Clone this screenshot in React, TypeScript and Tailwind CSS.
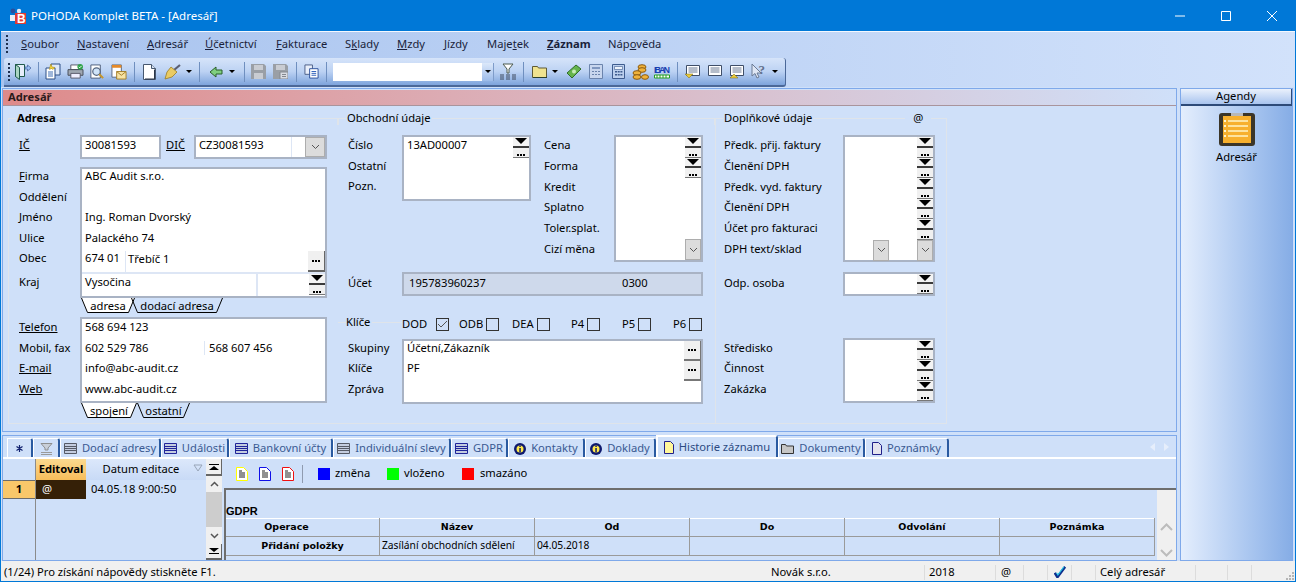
import type { ReactNode } from "react"

const frameLine = "border-[#dfe4ea]"

function Grip() {
    return (
        <div className="flex flex-col gap-[2px] w-[3px]">
            <div className="w-[2px] h-[2px] bg-[#1d2f4f]" />
            <div className="w-[2px] h-[2px] bg-[#1d2f4f]" />
            <div className="w-[2px] h-[2px] bg-[#1d2f4f]" />
            <div className="w-[2px] h-[2px] bg-[#1d2f4f]" />
            <div className="w-[2px] h-[2px] bg-[#1d2f4f]" />
        </div>
    )
}

function LogoIcon() {
    return (
        <svg width="17" height="16" viewBox="0 0 17 16">
            <circle cx="4" cy="3" r="2.4" fill="#2a4f9c" />
            <circle cx="10" cy="3" r="2.2" fill="#e8eef8" />
            <path d="M1 7h6v6H1z" fill="#e8eef8" />
            <path d="M6 5h11v11H6z" fill="#e23b35" />
            <text x="8" y="14.5" fontSize="12" fontWeight="700" fill="#fff" fontFamily="Liberation Sans, sans-serif">B</text>
        </svg>
    )
}

function ToolIcon({ name }: { name: string }) {
    switch (name) {
        case "exit":
            return (
                <svg width="18" height="18" viewBox="0 0 18 18" fill="none">
                    <path d="M1.500 1.500h9v12h-9z" fill="#e6eefa" stroke="#1f5a4a" />
                    <path d="M1.500 1.500l4 3v12l-4-3z" fill="#a9d6c2" stroke="#1f5a4a" />
                    <path d="M17 5l-3.500-3v2H11v2h2.500v2z" fill="#9cc0f5" stroke="#3d5f9c" strokeWidth=".7" />
                </svg>
            )
        case "docs":
            return (
                <svg width="16" height="17" viewBox="0 0 16 17">
                    <path d="M6 1h9v11H6z" fill="#dfe9f8" stroke="#2d4f86" />
                    <path d="M1 5h9v11H1z" fill="#fff" stroke="#2d4f86" />
                    <path d="M3 9h5M3 11h5M3 13h5" stroke="#3f6fb5" />
                    <path d="M6 1l1 3 3 .5-2 2-1.500-1-2 1 .5-3z" fill="#f4d53b" stroke="#b08a10" strokeWidth=".5" />
                </svg>
            )
        case "print":
            return (
                <svg width="17" height="15" viewBox="0 0 18 16">
                    <path d="M4 1h9v5H4z" fill="#fff" stroke="#556" />
                    <path d="M1 6h16v6H1z" fill="#9fa7b2" stroke="#444c58" />
                    <path d="M4 10h10v5H4z" fill="#eef" stroke="#556" />
                    <circle cx="14" cy="3" r="3" fill="#2fa24a" />
                    <path d="M12.500 3l1 1 2-2" stroke="#fff" fill="none" />
                </svg>
            )
        case "preview":
            return (
                <svg width="16" height="16" viewBox="0 0 17 17">
                    <path d="M2 1h10v14H2z" fill="#fff" stroke="#4a5a78" />
                    <circle cx="8" cy="8" r="4" fill="#cfe3f8" stroke="#55657f" strokeWidth="1.300" />
                    <path d="M11 11l4 4" stroke="#c6962c" strokeWidth="2.200" />
                </svg>
            )
        case "mail":
            return (
                <svg width="16" height="16" viewBox="0 0 17 17">
                    <path d="M1 1h10v13H1z" fill="#fff" stroke="#55657f" />
                    <path d="M1 1h10v3H1z" fill="#e58a2a" />
                    <path d="M6 8h10v8H6z" fill="#f6e3a5" stroke="#a47d24" />
                    <path d="M6 8l5 4 5-4" fill="none" stroke="#a47d24" />
                </svg>
            )
        case "doc":
            return (
                <svg width="13" height="16" viewBox="0 0 13 16">
                    <path d="M.5.500h8l4 4v11H.5z" fill="#fff" stroke="#46576f" />
                    <path d="M8.500.500v4h4" fill="#d6e2f4" stroke="#46576f" />
                    <path d="M11.500 5.500v9.500H2" stroke="#2a3547" fill="none" />
                </svg>
            )
        case "broom":
            return (
                <svg width="17" height="16" viewBox="0 0 17 16">
                    <path d="M10 6l6-5" stroke="#5b5f72" strokeWidth="2.200" />
                    <path d="M7 3l6 5-5 5-7 2 2-7z" fill="#eacb63" stroke="#9a7c23" strokeWidth=".8" />
                </svg>
            )
        case "back":
            return (
                <svg width="14" height="12" viewBox="0 0 14 12">
                    <path d="M1 6l6-5v3h6v4H7v3z" fill="#7fcf7f" stroke="#2a5f2a" />
                </svg>
            )
        case "save":
            return (
                <svg width="15" height="15" viewBox="0 0 15 15">
                    <path d="M0 0h13l2 2v13H0z" fill="#9a9fa6" />
                    <path d="M3 1h9v5H3zM3 9h9v6H3z" fill="#c9ccd2" />
                </svg>
            )
        case "saveas":
            return (
                <svg width="15" height="15" viewBox="0 0 15 15">
                    <path d="M0 0h13l2 2v13H0z" fill="#9a9fa6" />
                    <path d="M3 1h9v5H3z" fill="#c9ccd2" />
                    <path d="M7 8h8v7H7z" fill="#d9dce2" stroke="#84888f" />
                    <path d="M9 10.500h4M9 12.500h4" stroke="#84888f" />
                </svg>
            )
        case "copy":
            return (
                <svg width="15" height="15" viewBox="0 0 16 16">
                    <path d="M1 1h8v10H1z" fill="#e9effa" stroke="#4a5d85" />
                    <path d="M6 5h9v10H6z" fill="#fff" stroke="#2a4f9c" />
                    <path d="M8 8h5M8 10h5M8 12h5" stroke="#2a5cb8" />
                </svg>
            )
        case "filter":
            return (
                <svg width="18" height="17" viewBox="0 0 18 17">
                    <path d="M4 1h10l-4 5v4H8V6z" fill="#fff" stroke="#4d5a4f" />
                    <path d="M1 12h4M7 12h4M13 12h4M1 14h4M7 14h4M13 14h4M1 16h4M7 16h4M13 16h4" stroke="#3f4a5f" />
                </svg>
            )
        case "folder":
            return (
                <svg width="15" height="13" viewBox="0 0 15 13">
                    <path d="M.5 1.500h5l1 1.500h8v9.500H.5z" fill="#f0e38f" stroke="#5f5a36" />
                    <path d="M1 12.500h14" stroke="#2b3f2b" />
                </svg>
            )
        case "money":
            return (
                <svg width="16" height="15" viewBox="0 0 16 15">
                    <path d="M1 9l9-8 5 4-9 9z" fill="#65b44c" stroke="#2f6d2b" />
                    <circle cx="8" cy="7.500" r="2" fill="#c9ecb8" />
                </svg>
            )
        case "calcDim":
            return (
                <svg width="14" height="15" viewBox="0 0 14 15">
                    <path d="M.5.500h13v14H.5z" fill="#c8d6ee" stroke="#6b84ad" />
                    <path d="M3 3h8v2H3z" fill="#7f97c0" />
                    <path d="M3 7h2v1H3zM6 7h2v1H6zM9 7h2v1H9zM3 10h2v1H3zM6 10h2v1H6zM9 10h2v1H9z" fill="#6b84ad" />
                </svg>
            )
        case "calc":
            return (
                <svg width="13" height="15" viewBox="0 0 13 15">
                    <path d="M.5.500h12v14H.5z" fill="#bcd0ee" stroke="#3e5c8f" />
                    <path d="M2.500 2.500h8v3h-8z" fill="#eef4fc" stroke="#3e5c8f" strokeWidth=".6" />
                    <path d="M3 7h2v1.500H3zM5.700 7h2v1.500h-2zM8.400 7h2v1.500h-2zM3 10h2v1.500H3zM5.700 10h2v1.500h-2zM8.400 10h2v1.500h-2z" fill="#3e5c8f" />
                </svg>
            )
        case "coins":
            return (
                <svg width="17" height="16" viewBox="0 0 17 16">
                    <g fill="#f0b23a" stroke="#8b5a10">
                        <ellipse cx="10" cy="3" rx="4" ry="2.300" />
                        <ellipse cx="10" cy="6" rx="4" ry="2.300" />
                        <ellipse cx="5" cy="9" rx="4" ry="2.300" />
                        <ellipse cx="5" cy="13" rx="4" ry="2.300" />
                        <ellipse cx="13" cy="13" rx="3.500" ry="2.300" />
                    </g>
                </svg>
            )
        case "iban":
            return (
                <svg width="17" height="14" viewBox="0 0 17 14">
                    <text x="0" y="8" fontSize="9" fontWeight="700" fill="#1a3fb0" fontFamily="Liberation Sans Narrow, Liberation Sans, sans-serif" textLength="16">IBAN</text>
                    <path d="M.5 10h15v3H.5z" fill="#fff" stroke="#25a020" />
                    <path d="M3 10v3M6 10v3M9 10v3M12 10v3" stroke="#25a020" />
                </svg>
            )
        case "listDown":
        case "listUp":
        case "list":
            return (
                <svg width="15" height="15" viewBox="0 0 15 15">
                    <path d="M1.500 1.500h13v10h-13z" fill="#fff" stroke="#3f4e68" />
                    <path d="M3.500 4h9M3.500 6h9M3.500 8h9" stroke="#6b7a94" />
                    {name === "listDown" && <path d="M0 10h8l-4 4z" fill="#e9c93a" stroke="#7b6a15" strokeWidth=".5" />}
                    {name === "listUp" && <path d="M1 14h8l-4-4z" fill="#e9c93a" stroke="#7b6a15" strokeWidth=".5" />}
                </svg>
            )
        case "help":
            return (
                <svg width="16" height="17" viewBox="0 0 16 17">
                    <path d="M1 1v12l3-2.500 2 4.500 2-1-2-4h4z" fill="#dfe7f5" stroke="#6b7a94" />
                    <text x="7.500" y="11" fontSize="13" fontWeight="700" fill="#63718c" fontFamily="Liberation Serif, serif">?</text>
                </svg>
            )
        default:
            return null
    }
}

function Tool({ name, w = "w-[22px]" }: { name: string; w?: string }) {
    return (
        <div className={`flex items-center justify-center h-[22px] ${w}`}>
            <ToolIcon name={name} />
        </div>
    )
}

function Caret({ w = "w-[10px]" }: { w?: string }) {
    return (
        <div className={`flex items-center justify-center ${w}`}>
            <div className="w-0 h-0 border-x-[3.5px] border-x-transparent border-t-[3.5px] border-t-black" />
        </div>
    )
}

function Sep({ w = "w-[8px]" }: { w?: string }) {
    return (
        <div className={`flex justify-center ${w}`}>
            <div className="w-px h-[20px] bg-[#f2f6fd] border-l border-[#6f8fbf]" />
        </div>
    )
}

const menuItems: [ReactNode, string][] = [
    [<><u>S</u>oubor</>, "w-[56px]"],
    [<><u>N</u>astavení</>, "w-[70px]"],
    [<><u>A</u>dresář</>, "w-[58px]"],
    [<><u>Ú</u>četnictví</>, "w-[71px]"],
    [<><u>F</u>akturace</>, "w-[69px]"],
    [<>S<u>k</u>lady</>, "w-[52px]"],
    [<><u>M</u>zdy</>, "w-[47px]"],
    [<><u>J</u>ízdy</>, "w-[43px]"],
    [<>Maje<u>t</u>ek</>, "w-[60px]"],
    [<b><u>Z</u>áznam</b>, "w-[61px]"],
    [<>Náp<u>o</u>věda</>, "w-[70px]"],
]

function Toolbar() {
    return (
        <div className="flex items-center w-[782px] h-[29px] ml-[3px] pl-[4px] rounded-t-[3px] rounded-br-[3px] border-b-2 border-r border-[#4b6898] bg-gradient-to-b from-[#d6e4fa] via-[#bcd2f3] to-[#7ea4dc]">
            <Grip />
            <div className="w-px" />
            <Tool name="exit" />
            <Sep />
            <Tool name="docs" />
            <Tool name="print" />
            <Tool name="preview" />
            <Tool name="mail" />
            <Sep />
            <Tool name="doc" />
            <Tool name="broom" w="w-[24px]" />
            <Caret />
            <Sep w="w-[11px]" />
            <Tool name="back" />
            <Caret />
            <Sep w="w-[14px]" />
            <Tool name="save" w="w-[15px]" />
            <div className="w-[7px]" />
            <Tool name="saveas" w="w-[15px]" />
            <Sep w="w-[16px]" />
            <Tool name="copy" w="w-[15px]" />
            <Sep w="w-[14px]" />
            <div className="flex w-[161px] h-[18px] bg-white">
                <div className="flex-1" />
                <div className="flex w-[12px] bg-gradient-to-b from-[#dce8fa] to-[#9dbbe9] border-r border-[#7f9cc9]">
                    <Caret w="w-[12px]" />
                </div>
            </div>
            <Tool name="filter" w="w-[28px]" />
            <Sep w="w-[2px]" />
            <Tool name="folder" w="w-[30px]" />
            <Caret w="w-[2px]" />
            <div className="w-[7px]" />
            <Tool name="money" />
            <Tool name="calcDim" />
            <Tool name="calc" />
            <Tool name="coins" />
            <Tool name="iban" />
            <Sep />
            <Tool name="listDown" />
            <Tool name="list" />
            <Tool name="listUp" />
            <Tool name="help" w="w-[24px]" />
            <Caret w="w-[8px]" />
        </div>
    )
}

function Lbl({ children, h = "h-[20.5px]" }: { children: ReactNode; h?: string }) {
    return <div className={`${h} leading-[14px] whitespace-nowrap`}>{children}</div>
}

function Labels({ items, w, pt = "pt-[2px]", h }: { items: ReactNode[]; w: string; pt?: string; h?: string }) {
    return (
        <div className={`shrink-0 ${w} ${pt}`}>
            {items.map((it, i) => (
                <Lbl key={i} h={h}>{it}</Lbl>
            ))}
        </div>
    )
}

function Arrow() {
    return (
        <div className="flex justify-center items-start h-[10.5px] bg-[#f3f3f3] border-b-2 border-[#3a3a3a] pt-[1px]">
            <div className="w-0 h-0 border-x-[6px] border-x-transparent border-t-[6px] border-t-black" />
        </div>
    )
}

function DotRow() {
    return (
        <div className="flex gap-px">
            <div className="w-[2px] h-[2px] bg-black" />
            <div className="w-[2px] h-[2px] bg-black" />
            <div className="w-[2px] h-[2px] bg-black" />
        </div>
    )
}

function Dots({ tall }: { tall?: boolean }) {
    if (tall) {
        return (
            <div className="flex justify-center items-center h-[20px] bg-[#f0f0f0] border-b-2 border-r border-[#777]">
                <DotRow />
            </div>
        )
    }
    return (
        <div className="flex justify-center items-end h-[10px] bg-[#f0f0f0] border-b border-[#777] pb-[1px]">
            <DotRow />
        </div>
    )
}

function ArrowDots() {
    return (
        <div className="w-[16px]">
            <Arrow />
            <Dots />
        </div>
    )
}

function Chevron({ w = "w-[16px]", h = "h-[21px]" }: { w?: string; h?: string }) {
    return (
        <div className={`flex items-center justify-center ${w} ${h} bg-[#dcdcdc] border border-[#adadad]`}>
            <svg width="9" height="6" viewBox="0 0 9 6" fill="none">
                <path d="M1 1l3.500 3.500L8 1" stroke="#555" />
            </svg>
        </div>
    )
}

function Box({ children, className }: { children?: ReactNode; className: string }) {
    return <div className={`bg-white border-2 border-[#a9b3c4] ${className}`}>{children}</div>
}

function SubTab({ children, active, width, w }: { children: ReactNode; active?: boolean; width: number; w: string }) {
    return (
        <div className={`relative h-[15px] shrink-0 flex items-center justify-center ${w}`}>
            <svg className="absolute inset-0" width={width} height="15" viewBox={`0 0 ${width} 15`}>
                <path d={`M.5 0L6.500 14.500H${width - 6.5}L${width - 0.5} 0`} fill={active ? "#fff" : "none"} stroke="#000" />
            </svg>
            <span className="relative leading-[13px]">{children}</span>
        </div>
    )
}

function FrameHead({ title, bold, extra }: { title: string; bold?: boolean; extra?: string }) {
    return (
        <div className="flex h-[14px]">
            <div className={`w-[8px] h-[7px] self-end border-t border-l ${frameLine}`} />
            <div className={`leading-[14px] px-[1px] ${bold ? "font-bold" : ""}`}>{title}</div>
            {extra ? (
                <>
                    <div className={`w-[92px] h-[7px] self-end border-t ${frameLine}`} />
                    <div className="leading-[14px] px-[8px]">{extra}</div>
                </>
            ) : null}
            <div className={`flex-1 h-[7px] self-end border-t border-r ${frameLine}`} />
        </div>
    )
}

function AddressColumn() {
    return (
        <div className="w-[330px] shrink-0">
            <FrameHead title="Adresa" bold />
            <div className={`h-[299px] pl-[10px] border-l border-b ${frameLine} pt-[10px]`}>
                <div className="flex items-center h-[24px]">
                    <div className="w-[61px] pb-[3px]"><u>IČ</u></div>
                    <Box className="w-[81px] h-[24px] pl-[3px] pt-px leading-[14px]">30081593</Box>
                    <div className="w-[33px] pl-[5px] pb-[3px]"><u>DIČ</u></div>
                    <Box className="flex w-[133px] h-[24px] pl-[3px] leading-[14px]">
                        <div className="w-[92px] pt-px">CZ30081593</div>
                        <div className="w-px bg-[#dde6f5]" />
                        <div className="flex-1" />
                        <Chevron w="w-[20px]" h="h-[20px]" />
                    </Box>
                </div>
                <div className="flex mt-[8px]">
                    <div className="w-[61px] shrink-0 pt-[2px]">
                        <Lbl><u>F</u>irma</Lbl>
                        <Lbl>Oddělení</Lbl>
                        <Lbl>Jméno</Lbl>
                        <Lbl>Ulice</Lbl>
                        <Lbl h="h-[24px]">Obec</Lbl>
                        <Lbl>Kraj</Lbl>
                    </div>
                    <Box className="w-[247px] h-[131px]">
                        <div className="pl-[3px]">
                            <Lbl>ABC Audit s.r.o.</Lbl>
                            <Lbl>&nbsp;</Lbl>
                            <Lbl>Ing. Roman Dvorský</Lbl>
                            <Lbl>Palackého 74</Lbl>
                        </div>
                        <div className="flex h-[21px] leading-[14px]">
                            <div className="w-[43px] pl-[3px]">674 01</div>
                            <div className="w-px bg-[#dde6f5]" />
                            <div className="flex-1 pl-[2px] pt-px">Třebíč 1</div>
                            <div className="flex items-center justify-center w-[17px] h-[21px] bg-[#f0f0f0] border-b-2 border-r border-[#666]">
                                <DotRow />
                            </div>
                        </div>
                        <div className="h-[2px] bg-[#dde6f5]" />
                        <div className="flex h-[22px] leading-[14px]">
                            <div className="w-[174px] pl-[3px] pt-px">Vysočina</div>
                            <div className="w-[2px] bg-[#dde6f5]" />
                            <div className="flex-1" />
                            <ArrowDots />
                        </div>
                    </Box>
                </div>
                <div className="flex ml-[62px]">
                    <SubTab active width={54} w="w-[54px]">adresa</SubTab>
                    <div className="-ml-[4px]">
                        <SubTab width={92} w="w-[92px]">dodací adresa</SubTab>
                    </div>
                </div>
                <div className="flex mt-[4px]">
                    <Labels w="w-[61px]" pt="pt-[3px]" items={[<u>Telefon</u>, "Mobil, fax", <u>E-mail</u>, <u>Web</u>]} />
                    <Box className="w-[247px] h-[86px] pt-[1px]">
                        <div className="pl-[3px]">
                            <Lbl>568 694 123</Lbl>
                            <div className="flex h-[20.5px] leading-[14px]">
                                <div className="w-[119px]">602 529 786</div>
                                <div className="w-px h-[14px] bg-[#dde6f5]" />
                                <div className="pl-[4px]">568 607 456</div>
                            </div>
                            <Lbl>info@abc-audit.cz</Lbl>
                            <Lbl>www.abc-audit.cz</Lbl>
                        </div>
                    </Box>
                </div>
                <div className="flex ml-[62px]">
                    <SubTab active width={56} w="w-[56px]">spojení</SubTab>
                    <SubTab width={53} w="w-[53px]">ostatní</SubTab>
                </div>
            </div>
        </div>
    )
}

function Check({ on }: { on?: boolean }) {
    return (
        <div className="flex items-center justify-center w-[13px] h-[13px] border border-[#333]">
            {on && (
                <svg width="11" height="9" viewBox="0 0 11 9" fill="none">
                    <path d="M1 4l3 3 6-6" stroke="#555" />
                </svg>
            )}
        </div>
    )
}

function BusinessColumn() {
    return (
        <div className="w-[377px] shrink-0">
            <FrameHead title="Obchodní údaje" />
            <div className={`h-[299px] border-b ${frameLine} pt-[10px]`}>
                <div className="flex pl-[10px]">
                    <Labels w="w-[54px]" pt="pt-[3px]" items={["Číslo", "Ostatní", "Pozn."]} />
                    <Box className="flex w-[129px] h-[66px] pl-[3px] leading-[14px]">
                        <div className="flex-1 pt-[1px]">13AD00007</div>
                        <ArrowDots />
                    </Box>
                    <div className="w-[13px]" />
                    <Labels w="w-[70px]" pt="pt-[3px]" h="h-[20.8px]" items={["Cena", "Forma", "Kredit", "Splatno", "Toler.splat.", "Cizí měna"]} />
                    <Box className="flex justify-end w-[89px] h-[127px]">
                        <div className="flex flex-col">
                            <ArrowDots />
                            <ArrowDots />
                            <div className="flex-1" />
                            <Chevron />
                        </div>
                    </Box>
                </div>
                <div className="flex items-center pl-[10px] mt-[9px]">
                    <div className="w-[54px]">Účet</div>
                    <div className="flex items-center w-[301px] h-[24px] pl-[5px] bg-[#ced9eb] border-2 border-[#a9b3c4]">
                        <div className="w-[213px]">195783960237</div>
                        <div>0300</div>
                    </div>
                </div>
                <div className="flex items-center h-[14px] mt-[22px]">
                    <div className="flex items-center h-[14px] pb-[5px]">
                        <div className={`w-[8px] border-t ${frameLine}`} />
                        <div className="w-[26px]">Klíče</div>
                        <div className={`w-[30px] border-t ${frameLine}`} />
                    </div>
                    <div className="w-[34px]">DOD</div>
                    <Check on />
                    <div className="w-[10px]" />
                    <div className="w-[27px]">ODB</div>
                    <Check />
                    <div className="w-[13px]" />
                    <div className="w-[25px]">DEA</div>
                    <Check />
                    <div className="w-[21px]" />
                    <div className="w-[16px]">P4</div>
                    <Check />
                    <div className="w-[22px]" />
                    <div className="w-[16px]">P5</div>
                    <Check />
                    <div className="w-[22px]" />
                    <div className="w-[16px]">P6</div>
                    <Check />
                </div>
                <div className="flex pl-[10px] mt-[7px]">
                    <Labels w="w-[54px]" items={["Skupiny", "Klíče", "Zpráva"]} />
                    <Box className="flex w-[301px] h-[65px] pl-[3px]">
                        <div className="flex-1">
                            <Lbl>Účetní,Zákazník</Lbl>
                            <Lbl>PF</Lbl>
                        </div>
                        <div className="w-[17px]">
                            <Dots tall />
                            <Dots tall />
                        </div>
                    </Box>
                </div>
            </div>
        </div>
    )
}

function ExtraColumn() {
    return (
        <div className="w-[232px] shrink-0">
            <FrameHead title="Doplňkové údaje" extra="@" />
            <div className={`h-[299px] pl-[8px] border-l border-r border-b ${frameLine} pt-[10px]`}>
                <div className="flex">
                    <Labels w="w-[119px]" pt="pt-[3px]" h="h-[20.8px]" items={["Předk. přij. faktury", "Členění DPH", "Předk. vyd. faktury", "Členění DPH", "Účet pro fakturaci", "DPH text/sklad"]} />
                    <Box className="flex flex-col items-end w-[92px] h-[127px]">
                        <ArrowDots />
                        <ArrowDots />
                        <ArrowDots />
                        <ArrowDots />
                        <ArrowDots />
                        <div className="flex gap-[28px]">
                            <Chevron />
                            <Chevron />
                        </div>
                    </Box>
                </div>
                <div className="flex items-center mt-[9px]">
                    <div className="w-[119px]">Odp. osoba</div>
                    <Box className="flex justify-end w-[92px] h-[24px]">
                        <ArrowDots />
                    </Box>
                </div>
                <div className="flex mt-[42px]">
                    <Labels w="w-[119px]" items={["Středisko", "Činnost", "Zakázka"]} pt="pt-[3px]" />
                    <Box className="flex flex-col items-end w-[92px] h-[65px]">
                        <ArrowDots />
                        <ArrowDots />
                        <ArrowDots />
                    </Box>
                </div>
            </div>
        </div>
    )
}

function TabIcon({ kind }: { kind: string }) {
    if (kind === "star") {
        return (
            <svg width="7" height="7" viewBox="0 0 7 7" fill="none">
                <path d="M3.500 0v7M.5 1.500l6 4M6.500 1.500l-6 4" stroke="#10206e" strokeWidth="1.200" />
            </svg>
        )
    }
    if (kind === "filter") {
        return (
            <svg width="13" height="12" viewBox="0 0 13 12">
                <path d="M1 .5h11L8 5v2H5V5z" fill="#c9cfd8" stroke="#8d8f90" />
                <path d="M1 9.500h11M1 11.500h11" stroke="#9a9a9a" />
            </svg>
        )
    }
    if (kind === "listGrey" || kind === "listBlue") {
        const c = kind === "listGrey" ? "#555a66" : "#20259a"
        return (
            <svg width="13" height="11" viewBox="0 0 13 11">
                <path d="M.5.5h12v10H.5z" fill="#c4cde0" stroke={c} />
                <path d="M1 3.500h11M1 5.500h11M1 7.500h11" stroke={c} />
            </svg>
        )
    }
    if (kind === "info") {
        return (
            <svg width="12" height="12" viewBox="0 0 12 12">
                <circle cx="6" cy="6" r="6" fill="#0f1a6e" />
                <circle cx="6" cy="6" r="3.500" fill="#ffe94a" />
                <path d="M5.300 2.700h1.500v1.300H5.300zM5.300 5h1.500v4.300H5.300z" fill="#0f1a6e" />
            </svg>
        )
    }
    if (kind === "history") {
        return (
            <svg width="10" height="13" viewBox="0 0 10 13">
                <path d="M.5.5h6l3 3v9h-9z" fill="#fff79a" stroke="#20208a" />
            </svg>
        )
    }
    if (kind === "folder") {
        return (
            <svg width="13" height="11" viewBox="0 0 13 11">
                <path d="M.5 1.500h4l1 1.500h7v7.500H.5z" fill="#c6c6c6" stroke="#333" />
            </svg>
        )
    }
    return (
        <svg width="10" height="13" viewBox="0 0 10 13">
            <path d="M.5.5h6l3 3v9h-9z" fill="#e4e4ee" stroke="#20208a" />
        </svg>
    )
}

const tabs = [
    { kind: "star", label: "", w: "w-[26px]" },
    { kind: "filter", label: "", w: "w-[27px]" },
    { kind: "listGrey", label: "Dodací adresy", w: "w-[101px]" },
    { kind: "listBlue", label: "Události", w: "w-[68px]" },
    { kind: "listBlue", label: "Bankovní účty", w: "w-[104px]" },
    { kind: "listGrey", label: "Individuální slevy", w: "w-[118px]" },
    { kind: "listBlue", label: "GDPR", w: "w-[57px]" },
    { kind: "info", label: "Kontakty", w: "w-[77px]" },
    { kind: "info", label: "Doklady", w: "w-[71px]" },
    { kind: "history", label: "Historie záznamu", w: "w-[122px]", active: true },
    { kind: "folder", label: "Dokumenty", w: "w-[87px]" },
    { kind: "note", label: "Poznámky", w: "w-[84px]" },
]

function TabStrip() {
    return (
        <div className="flex items-end h-[23px] pl-[4px] border-b-2 border-white">
            {tabs.map((t, i) =>
                t.active ? (
                    <div key={i} className={`flex items-center justify-center gap-[5px] h-[22px] shrink-0 rounded-tr-[3px] border-r-2 border-[#2a5aa0] border-t-2 border-l-2 border-t-white border-l-white whitespace-nowrap text-[#2c4a82] ${t.w}`}>
                        <TabIcon kind={t.kind} />
                        <span>{t.label}</span>
                    </div>
                ) : (
                    <div key={i} className={`flex items-center justify-center gap-[5px] h-[19px] pt-px shrink-0 rounded-tr-[3px] border-r-2 border-[#2a5aa0] border-t border-l border-t-white border-l-white whitespace-nowrap text-[#3a5a92] ${t.w}`}>
                        <TabIcon kind={t.kind} />
                        {t.label && <span>{t.label}</span>}
                    </div>
                )
            )}
            <div className="flex-1" />
            <div className="flex gap-[9px] pb-[6px] pr-[7px]">
                <div className="w-0 h-0 border-y-[4px] border-y-transparent border-r-[5px] border-r-[#e6eefb]" />
                <div className="w-0 h-0 border-y-[4px] border-y-transparent border-l-[5px] border-l-[#e6eefb]" />
            </div>
        </div>
    )
}

function EndBtn({ down, h }: { down?: boolean; h: string }) {
    return (
        <div className={`flex flex-col items-center justify-center gap-px ${h} bg-[#f0f0f0] border-b-2 border-r border-[#666]`}>
            {down && <div className="w-0 h-0 border-x-[5px] border-x-transparent border-t-[4px] border-t-black" />}
            {!down && <div className="w-[10px] h-px bg-black" />}
            {!down && <div className="w-0 h-0 border-x-[5px] border-x-transparent border-b-[4px] border-b-black" />}
            {down && <div className="w-[10px] h-px bg-black" />}
        </div>
    )
}

function HistoryGrid() {
    return (
        <div className="flex w-[219px] shrink-0">
            <div className="w-[33px] border-r border-[#8b8b8b]">
                <div className="h-[21px]" />
                <div className="flex items-center justify-center h-[19px] bg-[#f9c76a] border-y border-[#6b6b6b] font-bold">1</div>
            </div>
            <div className="w-[170px]">
                <div className="flex h-[21px]">
                    <div className="flex items-center justify-center w-[50px] bg-gradient-to-b from-[#fbd98f] to-[#f7bd5a] font-bold">Editoval</div>
                    <div className="relative flex items-center justify-center w-[120px] bg-gradient-to-b from-[#dce8fb] to-[#c8daf6] pr-[10px]">
                        Datum editace
                        <svg className="absolute right-[3px] top-[5px]" width="10" height="8" viewBox="0 0 10 8" fill="none">
                            <path d="M1 1h8L5 7z" stroke="#98a5b8" />
                        </svg>
                    </div>
                </div>
                <div className="flex h-[19px]">
                    <div className="flex items-center w-[50px] pl-[6px] bg-[#352007] text-white">@</div>
                    <div className="flex items-center pl-[5px]">04.05.18 9:00:50</div>
                </div>
            </div>
            <div className="flex flex-col w-[16px]">
                <EndBtn h="h-[17px]" />
                <div className="flex-1 flex flex-col bg-[#f0f0f0]">
                    <div className="flex justify-center items-center h-[16px]">
                        <svg width="9" height="6" viewBox="0 0 9 6" fill="none"><path d="M1 5l3.500-3.500L8 5" stroke="#555" strokeWidth="1.500" /></svg>
                    </div>
                    <div className="flex-1 bg-[#cdcdcd]" />
                    <div className="flex justify-center items-center h-[17px]">
                        <svg width="9" height="6" viewBox="0 0 9 6" fill="none"><path d="M1 1l3.500 3.500L8 1" stroke="#555" strokeWidth="1.500" /></svg>
                    </div>
                </div>
                <EndBtn down h="h-[16px]" />
            </div>
        </div>
    )
}

function PageIcon({ color }: { color: string }) {
    return (
        <svg width="12" height="14" viewBox="0 0 12 14">
            <path d="M.5.5h7l4 4v9H.5z" fill="#fff" stroke={color} />
            <path d="M3 4h3M3 6h6M3 8h6M3 10h6" stroke="#222" />
        </svg>
    )
}

const tableCols = [
    { head: "Operace", w: "w-[154px]", bold: true, headPad: "pr-[32px]", value: "Přidání položky" },
    { head: "Název", w: "w-[155px]", headPad: "", value: "Zasílání obchodních sdělení" },
    { head: "Od", w: "w-[155px]", headPad: "", value: "04.05.2018" },
    { head: "Do", w: "w-[155px]", headPad: "", value: "" },
    { head: "Odvolání", w: "w-[155px]", headPad: "", value: "" },
    { head: "Poznámka", w: "w-[155px]", headPad: "", value: "" },
]

function HistoryDetail() {
    return (
        <div className="flex-1 min-w-0 flex flex-col">
            <div className="flex items-center h-[29px] pl-[14px]">
                <PageIcon color="#ffff00" />
                <div className="w-[11px]" />
                <PageIcon color="#1010e8" />
                <div className="w-[11px]" />
                <PageIcon color="#f01010" />
                <div className="w-px h-[18px] mx-[8px] bg-[#8f9bb0]" />
                <div className="w-[12px] h-[12px] ml-[7px] mr-[5px] bg-[#0000ff]" />
                <span className="w-[52px]">změna</span>
                <div className="w-[12px] h-[12px] mr-[5px] bg-[#00ff00]" />
                <span className="w-[58px]">vloženo</span>
                <div className="w-[12px] h-[12px] mr-[6px] bg-[#ff0000]" />
                <span>smazáno</span>
            </div>
            <div className="flex flex-1 ml-[2px] border-t-2 border-l-2 border-[#6e6e6e]">
                <div className="flex-1 min-w-0">
                    <div className="h-[28px] pt-[14px] leading-[14px] font-bold text-[11px] font-['Liberation_Sans',sans-serif]">GDPR</div>
                    <div className="flex">
                        {tableCols.map((c, i) => (
                            <div key={i} className={`shrink-0 ${c.w} border-r border-[#9a9a9a]`}>
                                <div className={`flex items-center justify-center h-[19px] border-t border-t-white border-b border-b-[#9a9a9a] font-bold font-['DejaVu_Sans',sans-serif] text-[9.5px] ${c.headPad}`}>{c.head}</div>
                                <div className={`flex items-center h-[19px] border-b border-[#9a9a9a] ${c.bold ? "justify-center font-bold font-['DejaVu_Sans',sans-serif] text-[9.5px]" : "pl-[2px] text-[10.25px]"}`}>{c.value}</div>
                            </div>
                        ))}
                    </div>
                </div>
                <div className="flex flex-col items-center justify-center gap-[18px] w-[19px] bg-[#f0f0f0] pt-[30px]">
                    <svg width="13" height="8" viewBox="0 0 13 8" fill="none"><path d="M1 7l5.500-5.500L12 7" stroke="#bcbcbc" strokeWidth="2" /></svg>
                    <svg width="13" height="8" viewBox="0 0 13 8" fill="none"><path d="M1 1l5.500 5.500L12 1" stroke="#bcbcbc" strokeWidth="2" /></svg>
                </div>
            </div>
        </div>
    )
}

function StatusBar() {
    return (
        <div className="flex items-center h-[20px] shrink-0 pl-[3px] pt-[2px] bg-[#f0f0f0] leading-[14px] whitespace-nowrap">
            <div className="w-[767px]">(1/24) Pro získání nápovědy stiskněte F1.</div>
            <div className="w-[153px]">Novák s.r.o.</div>
            <div className="w-[71px] h-[15px] flex items-center pl-[4px] border-l border-[#dcdcdc]">2018</div>
            <div className="w-[28px] h-[15px] flex items-center pl-[5px] border-l border-[#dcdcdc]">@</div>
            <div className="w-[24px] h-[15px] border-l border-[#dcdcdc]" />
            <div className="w-[24px] h-[15px] flex items-center justify-center border-l border-[#dcdcdc]">
                <svg width="12" height="12" viewBox="0 0 14 14" fill="none">
                    <path d="M1 8l3 5L13 1" stroke="#0e2d8c" strokeWidth="3" />
                    <path d="M3 8l1.500 2.500L11.500 1" stroke="#22c8e8" strokeWidth="1.200" />
                </svg>
            </div>
            <div className="w-[24px] h-[15px] border-l border-[#dcdcdc]" />
            <div className="w-[100px] h-[15px] flex items-center pl-[4px] border-l border-[#dcdcdc]">Celý adresář</div>
            <div className="w-[32px] h-[15px] border-l border-[#dcdcdc]" />
            <div className="w-[24px] h-[15px] border-l border-[#dcdcdc]" />
            <div className="w-[24px] h-[15px] border-l border-[#dcdcdc]" />
            <div className="flex-1 flex justify-end items-end h-[15px] pr-[1px]">
                <svg width="9" height="9" viewBox="0 0 9 9">
                    <path d="M7 1h2v2H7zM4 4h2v2H4zM7 4h2v2H7zM1 7h2v2H1zM4 7h2v2H4zM7 7h2v2H7z" fill="#b5b5b5" />
                </svg>
            </div>
        </div>
    )
}

export default function App() {
    return (
        <div className="flex flex-col w-[1296px] h-[582px] overflow-hidden bg-[#0078d7] text-black text-[11.2px] font-['Noto_Sans',sans-serif]">
            {/* Title bar */}
            <div className="flex items-center h-[31px] shrink-0 pl-[9px] text-white text-[11.5px]">
                <LogoIcon />
                <span className="ml-[5px]">POHODA Komplet BETA - [Adresář]</span>
                <div className="flex-1" />
                <svg width="10" height="10" viewBox="0 0 10 10" fill="none" className="mr-[36px]"><path d="M0 5h10" stroke="#fff" /></svg>
                <svg width="10" height="10" viewBox="0 0 10 10" fill="none" className="mr-[36px]"><path d="M.5.500h9v9h-9z" stroke="#fff" /></svg>
                <svg width="10" height="10" viewBox="0 0 10 10" fill="none" className="mr-[19px]"><path d="M0 0l10 10M10 0L0 10" stroke="#fff" /></svg>
            </div>
            <div className="flex-1 min-h-0 flex flex-col mx-px mb-px bg-[#cfe0f9] border-t border-[#f4f8fe]">
                {/* Menu */}
                <div className="flex items-center h-[26px] shrink-0 pl-[5px] pb-[2px] bg-gradient-to-r from-[#a8c3ee] to-[#d2e2fb]">
                    <Grip />
                    <div className="w-[12px]" />
                    {menuItems.map(([label, w], i) => (
                        <div key={i} className={`${w} text-[#1a1f3a]`}>{label}</div>
                    ))}
                </div>
                <div className="shrink-0 bg-gradient-to-r from-[#a8c3ee] to-[#d2e2fb]">
                    <Toolbar />
                </div>
                {/* Panels */}
                <div className="flex flex-1 min-h-0 pl-px pr-px mt-px">
                    <div className="flex flex-col w-[1175px] shrink-0">
                        <div className="h-[344px] pt-px border border-[#7fa9ea]">
                            <div className="flex items-center h-[16px] pl-[5px] font-bold text-[#2a1a1a] border-b border-[#a9949c] bg-gradient-to-r from-[#de8a8a] to-[#cfe0f9]">Adresář</div>
                            <div className="flex pl-[5px] pt-[5px]">
                                <AddressColumn />
                                <BusinessColumn />
                                <ExtraColumn />
                            </div>
                        </div>
                        <div className="flex flex-col flex-1 min-h-0 mt-[3px] border border-[#7fa9ea]">
                            <TabStrip />
                            <div className="flex flex-1 min-h-0">
                                <HistoryGrid />
                                <HistoryDetail />
                            </div>
                        </div>
                    </div>
                    <div className="flex flex-col flex-1 min-w-0 ml-[3px] mr-px border border-[#7fa9ea] bg-gradient-to-r from-[#e4eefd] to-[#86ade6]">
                        <div className="flex items-center justify-center h-[17px] shrink-0 border-b-2 border-r border-[#2d4a78] bg-gradient-to-b from-[#eaf1fc] to-[#a9c4ee]">Agendy</div>
                        <div className="flex flex-col items-center pt-[6px]">
                            <svg width="36" height="34" viewBox="0 0 36 34">
                                <rect x="0" y="1" width="36" height="33" rx="3" fill="#3b3528" />
                                <rect x="4" y="4" width="28" height="27" fill="#f7b02e" />
                                <path d="M12 1h12v3H12z" fill="#b8b8b8" />
                                <path d="M9 9h20M9 14h20M9 19h20M9 24h20" stroke="#fde3a0" strokeWidth="2" />
                                <path d="M5 9h2M5 14h2M5 19h2M5 24h2" stroke="#fff4d0" strokeWidth="2" />
                            </svg>
                            <div className="mt-[3px]">Adresář</div>
                        </div>
                    </div>
                </div>
                <StatusBar />
            </div>
        </div>
    )
}
